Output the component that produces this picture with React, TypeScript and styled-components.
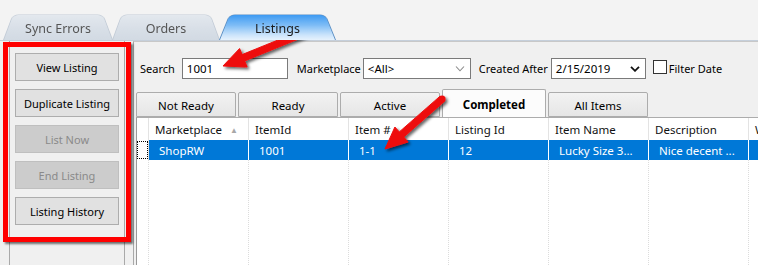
import React from "react";
import styled, { createGlobalStyle, css } from "styled-components";

const GlobalStyle = createGlobalStyle`
  html, body { margin: 0; padding: 0; }
  body {
    width: 758px;
    height: 265px;
    overflow: hidden;
    background: #f0f0f0;
    font-family: "Noto Sans", "Open Sans", sans-serif;
    color: #000;
  }
`;

const Window = styled.div`
  position: relative;
  width: 758px;
  height: 265px;
  overflow: hidden;
  background: #f0f0f0;
  display: flex;
  flex-direction: column;
`;

const TabStrip = styled.div`
  height: 40px;
  flex: none;
  display: flex;
  align-items: flex-end;
  padding-left: 3px;
  border-bottom: 1px solid #c5cfdb;
  background: #f3f3f3;
`;

const TopTab = styled.div<{ $active?: boolean; $w: number }>`
  position: relative;
  width: ${(p) => p.$w}px;
  height: 25px;
  margin-right: -1px;
  display: flex;
  align-items: center;
  justify-content: center;
  padding-top: 2px;
  box-sizing: border-box;
  font-size: 12.5px;
  color: ${(p) => (p.$active ? "#1b1b1b" : "#555")};
  z-index: ${(p) => (p.$active ? 2 : 1)};
  &::before {
    content: "";
    position: absolute;
    left: 0;
    right: 0;
    bottom: 0;
    height: 32px;
    z-index: -1;
    border: 1px solid ${(p) => (p.$active ? "#5b8fc4" : "#c3ccd7")};
    border-bottom: none;
    border-radius: 7px 7px 0 0;
    transform-origin: bottom;
    transform: perspective(53px) rotateX(20deg);
    background: ${(p) =>
      p.$active
        ? "linear-gradient(#3d9af2 0%, #7dbcf6 45%, #cfe6fb 85%, #e6f2fd 100%)"
        : "linear-gradient(#e3e8ee 0%, #d8dfe7 60%, #d2dae3 100%)"};
  }
`;

const Body = styled.div`
  flex: 1;
  display: flex;
  min-height: 0;
`;

const SidePanel = styled.div`
  margin-left: 9px;
  width: 116px;
  box-sizing: border-box;
  flex: none;
  border-left: 1px solid #a9a9a9;
  border-right: 1px solid #a9a9a9;
  background: #f0f0f0;
  padding: 12px 0 0 5px;
  display: flex;
  flex-direction: column;
  gap: 8px;
`;

const ActionButton = styled.div<{ $disabled?: boolean }>`
  width: 104px;
  height: 28px;
  box-sizing: border-box;
  border: 1px solid #adadad;
  background: ${(p) => (p.$disabled ? "#cccccc" : "#e1e1e1")};
  border-color: ${(p) => (p.$disabled ? "#bfbfbf" : "#adadad")};
  color: ${(p) => (p.$disabled ? "#8a8a8a" : "#000")};
  font-size: 11px;
  display: flex;
  align-items: center;
  justify-content: center;
`;

const MainPane = styled.div`
  margin-left: 8px;
  flex: 1;
  min-width: 0;
  border-left: 1px solid #a9a9a9;
  border-top: 1px solid #c8c8c8;
  display: flex;
  flex-direction: column;
`;

const FilterBar = styled.div`
  height: 31px;
  padding: 16px 0 0 6px;
  display: flex;
  align-items: flex-start;
  font-size: 11px;
`;

const Label = styled.span<{ $gap: number }>`
  height: 22px;
  line-height: 22px;
  margin-right: ${(p) => p.$gap}px;
  white-space: nowrap;
`;

const Field = styled.div<{ $w: number; $mr: number }>`
  width: ${(p) => p.$w}px;
  height: 21px;
  box-sizing: border-box;
  margin-right: ${(p) => p.$mr}px;
  border: 1px solid #7a7a7a;
  background: #fff;
  display: flex;
  align-items: center;
  justify-content: space-between;
  padding: 0 5px 0 4px;
  font-size: 11.5px;
  white-space: nowrap;
`;

const Chevron = styled.svg<{ $dark?: boolean }>`
  width: 10px;
  height: 6px;
  stroke: ${(p) => (p.$dark ? "#111" : "#8a8a8a")};
  stroke-width: ${(p) => (p.$dark ? 1.8 : 1.1)};
  fill: none;
`;

const CheckBox = styled.div`
  width: 12px;
  height: 12px;
  margin: 2px 2px 0 0;
  border: 1px solid #333;
  background: #fff;
`;

const SubTabs = styled.div`
  height: 28px;
  margin-left: 2px;
  display: flex;
  align-items: flex-end;
  gap: 2px;
  font-size: 11.5px;
`;

const SubTab = styled.div<{ $active?: boolean; $w: number }>`
  width: ${(p) => p.$w}px;
  height: 25px;
  box-sizing: border-box;
  border: 1px solid #acacac;
  border-radius: 2px 2px 0 0;
  display: flex;
  align-items: center;
  justify-content: center;
  padding-top: 1px;
  ${(p) =>
    p.$active
      ? css`
          background: #fcfcfc;
          font-weight: 700;
          margin-bottom: -1px;
          height: 29px;
          border-bottom: none;
          padding-top: 0;
        `
      : css`
          background: linear-gradient(#f2f2f2, #e6e6e6);
        `}
`;

const Grid = styled.div`
  flex: 1;
  margin-left: 2px;
  border-left: 1px solid #9a9a9a;
  border-top: 1px solid #acacac;
  background: #fff;
  display: grid;
  grid-template-columns: 12px repeat(6, 100px) 1fr;
  grid-template-rows: 22px 20px 1fr;
  font-size: 11.5px;
`;

const HeadCell = styled.div`
  border-right: 1px solid #e3e3e3;
  padding-left: 6px;
  display: flex;
  align-items: center;
  white-space: nowrap;
  overflow: hidden;
  color: #111;
`;

const SortMark = styled.span`
  font-size: 8px;
  color: #a8a8a8;
  margin-left: 8px;
`;

const RowHeadCell = styled.div`
  border-right: 1px solid #e3e3e3;
  display: flex;
  align-items: stretch;
  justify-content: flex-start;
  padding: 1px 0 1px 0;
`;

const FocusMark = styled.div`
  width: 9px;
  border: 1px dotted #000;
`;

const DataCell = styled.div`
  background: #0078d7;
  color: #fff;
  border-right: 1px solid #fff;
  padding-left: 10px;
  display: flex;
  align-items: center;
  white-space: nowrap;
  overflow: hidden;
`;

const FillCell = styled.div`
  border-right: 1px dotted #dcdcdc;
`;

const Highlight = styled.div`
  position: absolute;
  left: 3px;
  top: 42px;
  width: 118px;
  height: 190px;
  border: 5px solid #ff0000;
  box-shadow: 2px 2px 2px rgba(0, 0, 0, 0.55);
  pointer-events: none;
`;

const Overlay = styled.svg`
  position: absolute;
  left: 0;
  top: 0;
  width: 758px;
  height: 265px;
  pointer-events: none;
`;

function arrowPath(x1: number, y1: number, x2: number, y2: number) {
  const dx = x2 - x1;
  const dy = y2 - y1;
  const len = Math.hypot(dx, dy);
  const ux = dx / len;
  const uy = dy / len;
  const nx = -uy;
  const ny = ux;
  const headLen = 22;
  const headW = 10;
  const shaftW = 3.4;
  const bx = x2 - ux * headLen;
  const by = y2 - uy * headLen;
  const pts = [
    [x1 + nx * shaftW, y1 + ny * shaftW],
    [bx + nx * shaftW, by + ny * shaftW],
    [bx + nx * headW, by + ny * headW],
    [x2, y2],
    [bx - nx * headW, by - ny * headW],
    [bx - nx * shaftW, by - ny * shaftW],
    [x1 - nx * shaftW, y1 - ny * shaftW],
  ];
  return "M" + pts.map((p) => p[0].toFixed(1) + " " + p[1].toFixed(1)).join(" L") + " Z";
}

const Arrow: React.FC<{ x1: number; y1: number; x2: number; y2: number }> = ({ x1, y1, x2, y2 }) => (
  <g filter="url(#shadow)">
    <path d={arrowPath(x1, y1, x2, y2)} fill="#ee1111" stroke="#ee1111" strokeWidth={1} strokeLinejoin="round" />
    <circle cx={x1} cy={y1} r={3.6} fill="#ee1111" />
  </g>
);

const columns = ["Marketplace", "ItemId", "Item #", "Listing Id", "Item Name", "Description", "W"];
const row = ["ShopRW", "1001", "1-1", "12", "Lucky Size 3...", "Nice decent ...", ""];

export default function App() {
  return (
    <Window>
      <GlobalStyle />
      <TabStrip>
        <TopTab $w={110}>Sync Errors</TopTab>
        <TopTab $w={108}>Orders</TopTab>
        <TopTab $w={117} $active>
          Listings
        </TopTab>
      </TabStrip>
      <Body>
        <SidePanel>
          <ActionButton>View Listing</ActionButton>
          <ActionButton>Duplicate Listing</ActionButton>
          <ActionButton $disabled>List Now</ActionButton>
          <ActionButton $disabled>End Listing</ActionButton>
          <ActionButton>Listing History</ActionButton>
        </SidePanel>
        <MainPane>
          <FilterBar>
            <Label $gap={7}>Search</Label>
            <Field $w={106} $mr={9}>1001</Field>
            <Label $gap={2}>Marketplace</Label>
            <Field $w={108} $mr={8}>
              <span>&lt;All&gt;</span>
              <Chevron viewBox="0 0 10 6">
                <path d="M1 0.5 L5 4.8 L9 0.5" />
              </Chevron>
            </Field>
            <Label $gap={3}>Created After</Label>
            <Field $w={95} $mr={7}>
              <span>2/15/2019</span>
              <Chevron viewBox="0 0 10 6" $dark>
                <path d="M1 0.8 L5 4.8 L9 0.8" />
              </Chevron>
            </Field>
            <CheckBox />
            <Label $gap={0}>Filter Date</Label>
          </FilterBar>
          <SubTabs>
            <SubTab $w={100}>Not Ready</SubTab>
            <SubTab $w={100}>Ready</SubTab>
            <SubTab $w={100}>Active</SubTab>
            <SubTab $w={104} $active>
              Completed
            </SubTab>
            <SubTab $w={100}>All Items</SubTab>
          </SubTabs>
          <Grid>
            <RowHeadCell />
            {columns.map((c, i) => (
              <HeadCell key={c}>
                {c}
                {i === 0 && <SortMark>▲</SortMark>}
              </HeadCell>
            ))}
            <RowHeadCell>
              <FocusMark />
            </RowHeadCell>
            {row.map((v, i) => (
              <DataCell key={i}>{v}</DataCell>
            ))}
            {Array.from({ length: 8 }).map((_, i) => (
              <FillCell key={i} />
            ))}
          </Grid>
        </MainPane>
      </Body>
      <Highlight />
      <Overlay viewBox="0 0 758 265">
        <defs>
          <filter id="shadow" x="-20%" y="-20%" width="150%" height="150%">
            <feDropShadow dx="2" dy="2" stdDeviation="1.6" floodColor="#000" floodOpacity="0.6" />
          </filter>
        </defs>
        <Arrow x1={314} y1={29} x2={223} y2={66} />
        <Arrow x1={442} y1={99} x2={385} y2={149} />
      </Overlay>
    </Window>
  );
}
